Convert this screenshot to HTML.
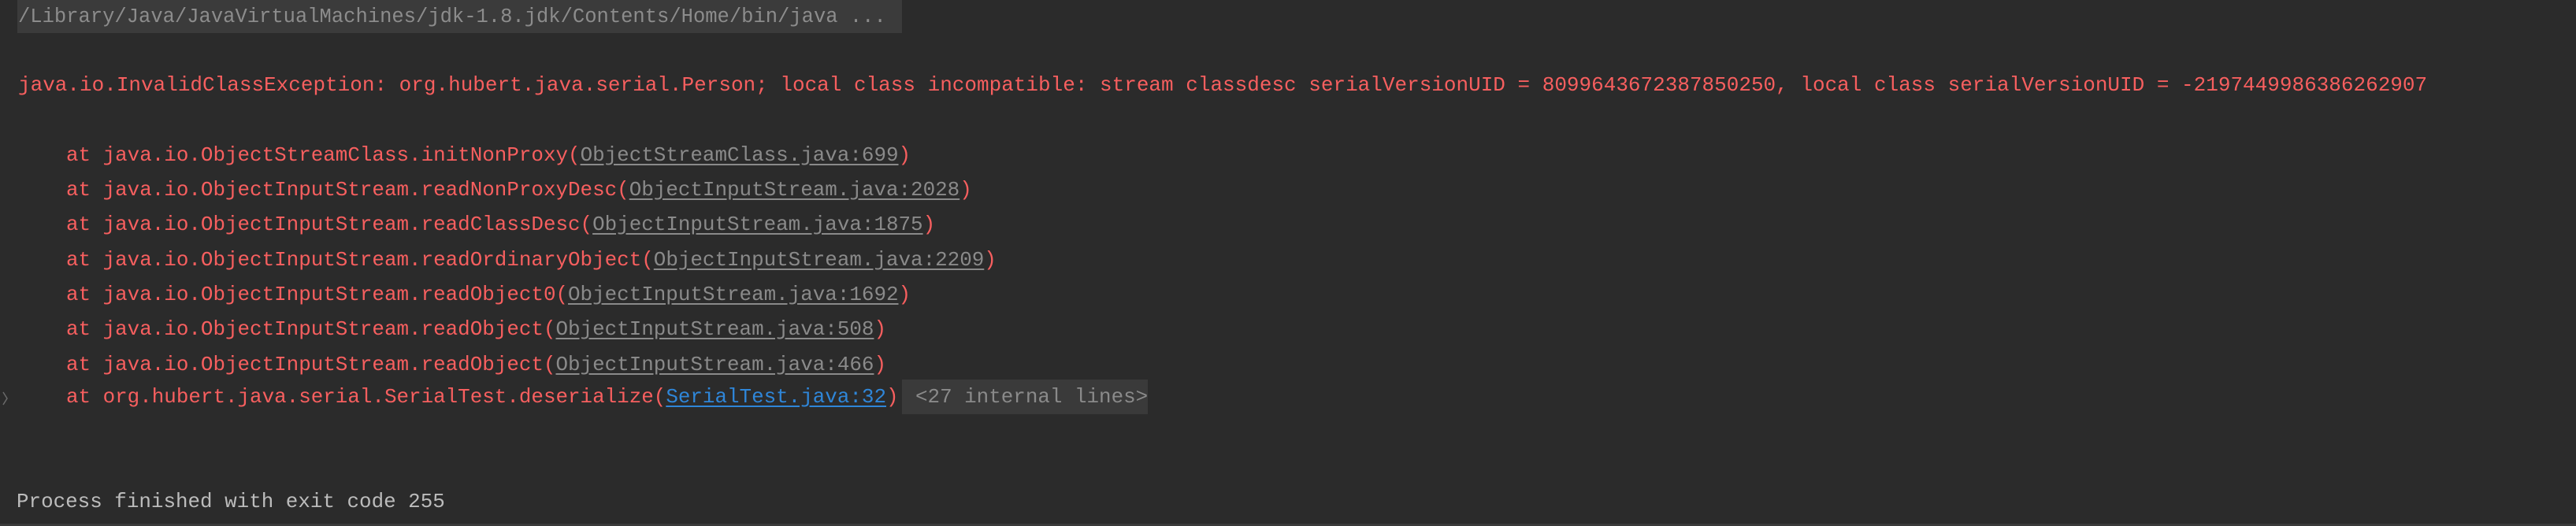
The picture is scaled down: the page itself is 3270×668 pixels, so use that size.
<!DOCTYPE html>
<html><head><meta charset="utf-8"><style>
html,body{margin:0;padding:0;}
body{width:3270px;height:668px;background:#2b2b2b;position:relative;overflow:hidden;font-family:"Liberation Mono",monospace;font-size:25.9px;}
.l{position:absolute;white-space:pre;line-height:44px;height:44px;}
.r{color:#f75f5f;}
.g{color:#8a8a8a;text-decoration:underline;text-underline-offset:4px;}
.b{color:#2f86d8;text-decoration:underline;text-underline-offset:4px;}
.hdr{position:absolute;left:22px;top:0;width:1123px;height:42px;background:#3b3b3b;}
.box{position:absolute;left:1145px;top:482px;width:312px;height:44px;background:#3a3a3a;}
</style></head><body>
<div class="hdr"></div>
<div class="l" style="left:23px;top:0px;color:#8c8c8c;font-size:25.5px;">/Library/Java/JavaVirtualMachines/jdk-1.8.jdk/Contents/Home/bin/java ...</div>
<div class="l r" style="left:23px;top:86px;font-size:26px;">java.io.InvalidClassException: org.hubert.java.serial.Person; local class incompatible: stream classdesc serialVersionUID = 8099643672387850250, local class serialVersionUID = -2197449986386262907</div>
<div class="l r" style="left:84px;top:175px;">at java.io.ObjectStreamClass.initNonProxy(<span class="g">ObjectStreamClass.java:699</span>)</div>
<div class="l r" style="left:84px;top:219px;">at java.io.ObjectInputStream.readNonProxyDesc(<span class="g">ObjectInputStream.java:2028</span>)</div>
<div class="l r" style="left:84px;top:263px;">at java.io.ObjectInputStream.readClassDesc(<span class="g">ObjectInputStream.java:1875</span>)</div>
<div class="l r" style="left:84px;top:308px;">at java.io.ObjectInputStream.readOrdinaryObject(<span class="g">ObjectInputStream.java:2209</span>)</div>
<div class="l r" style="left:84px;top:352px;">at java.io.ObjectInputStream.readObject0(<span class="g">ObjectInputStream.java:1692</span>)</div>
<div class="l r" style="left:84px;top:396px;">at java.io.ObjectInputStream.readObject(<span class="g">ObjectInputStream.java:508</span>)</div>
<div class="l r" style="left:84px;top:441px;">at java.io.ObjectInputStream.readObject(<span class="g">ObjectInputStream.java:466</span>)</div>
<div class="box"></div>
<svg style="position:absolute;left:0;top:494px" width="14" height="24"><path d="M4 4 L9 12 L4 20" stroke="#6a6a6a" stroke-width="1.5" fill="none"/></svg>
<div class="l r" style="left:84px;top:482px;">at org.hubert.java.serial.SerialTest.deserialize(<span class="b">SerialTest.java:32</span>)</div>
<div class="l" style="left:1162px;top:482px;color:#8a8a8a;">&lt;27 internal lines&gt;</div>
<div class="l" style="left:21px;top:615px;color:#bcbcbc;">Process finished with exit code 255</div>
<div style="position:absolute;left:0;top:665px;width:3270px;height:3px;background:#3a3a3a;"></div>
</body></html>
